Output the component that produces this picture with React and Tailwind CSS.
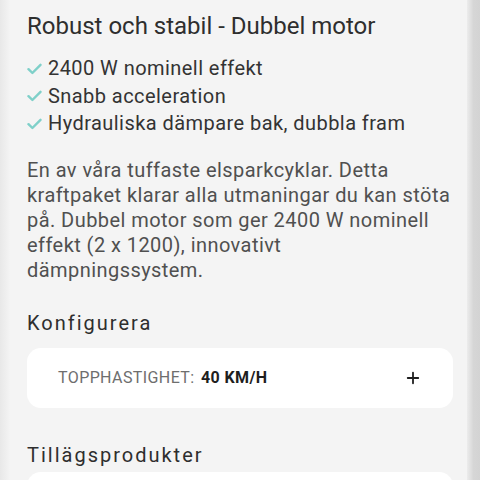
import { Plus } from "lucide-react";

const features = [
    "2400 W nominell effekt",
    "Snabb acceleration",
    "Hydrauliska dämpare bak, dubbla fram"
];

const Check = () => (
    <svg width="15" height="12" viewBox="0 0 15 12" className="shrink-0">
        <path
            d="M1.5 6.2 L5.4 10 L13.5 1.8"
            fill="none"
            stroke="#7fd0c9"
            strokeWidth="2.4"
            strokeLinecap="round"
            strokeLinejoin="round"
        />
    </svg>
);

const App = () => {
    return (
        <div className="flex h-[480px] w-[480px] overflow-hidden bg-[#f4f4f4] font-['Roboto',sans-serif]">
            <div className="w-[10px] shrink-0 bg-gradient-to-r from-[#e8e8e8] to-[#f4f4f4]" />

            <div className="flex-1 pl-[17px] pr-[14px] pt-[11px]">
                <h1 className="text-[24px] leading-[30px] text-[#2e2e2e]">
                    Robust och stabil - Dubbel motor
                </h1>

                <ul className="mt-[14px]">
                    {features.map((feature) => (
                        <li
                            key={feature}
                            className="flex items-center gap-[6px] text-[20px] leading-[27.5px] tracking-[0.022em] text-[#333]"
                        >
                            <Check />
                            <span>{feature}</span>
                        </li>
                    ))}
                </ul>

                <p className="mt-[20px] text-[20px] leading-[25px] tracking-[0.022em] text-[#505050]">
                    En av våra tuffaste elsparkcyklar. Detta
                    <br />
                    kraftpaket klarar alla utmaningar du kan stöta
                    <br />
                    på. Dubbel motor som ger 2400 W nominell
                    <br />
                    effekt (2 x 1200), innovativt
                    <br />
                    dämpningssystem.
                </p>

                <h2 className="mt-[27px] text-[20px] leading-[26px] tracking-[0.1em] text-[#2e2e2e]">
                    Konfigurera
                </h2>

                <div className="mt-[12px] flex h-[60px] items-center justify-between rounded-[14px] bg-white pl-[31px] pr-[31px]">
                    <p className="text-[16px] tracking-[0.025em] text-[#6e6e6e]">
                        TOPPHASTIGHET:{" "}
                        <span className="ml-[2px] font-bold text-[#1e1e1e]">40 KM/H</span>
                    </p>
                    <Plus size={18} strokeWidth={2.4} className="text-[#1e1e1e]" />
                </div>

                <h2 className="mt-[34px] text-[20px] leading-[26px] tracking-[0.1em] text-[#2e2e2e]">
                    Tillägsprodukter
                </h2>

                <div className="mt-[4px] h-[60px] rounded-[14px] bg-white" />
            </div>

            <div className="w-[13px] shrink-0 bg-gradient-to-r from-[#ececec] via-[#d6d6d6] to-[#d3d3d3]" />
        </div>
    );
};

export default App;
